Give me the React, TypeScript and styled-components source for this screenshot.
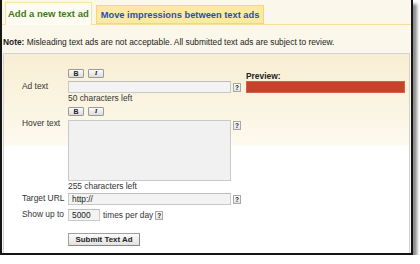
import React from "react";
import styled, { createGlobalStyle } from "styled-components";

const GlobalStyle = createGlobalStyle`
  html, body {
    margin: 0;
    padding: 0;
    background: #fff;
  }
  body {
    font-family: "Liberation Sans", Arial, sans-serif;
    font-size: 8.4px;
    color: #333;
  }
`;

const Frame = styled.div`
  width: 409px;
  height: 253px;
  border: 2px solid #151515;
  border-top: none;
  box-shadow: 4px 4px 3px rgba(0, 0, 0, 0.45);
  background: #fbf7ea;
  display: flex;
  flex-direction: column;
  overflow: hidden;
`;

const TabBar = styled.div`
  display: flex;
  align-items: flex-end;
  gap: 4px;
  height: 25px;
  padding-left: 3px;
  border-bottom: 1px solid #fcdd96;
  box-sizing: border-box;
`;

const Tab = styled.div<{ $active?: boolean }>`
  display: flex;
  align-items: center;
  box-sizing: border-box;
  height: ${(p) => (p.$active ? "23px" : "19px")};
  margin-bottom: ${(p) => (p.$active ? "-1px" : "0")};
  padding: ${(p) => (p.$active ? "0 2px 2px 2px" : "0 4px")};
  font-weight: bold;
  font-size: ${(p) => (p.$active ? "9.5px" : "9.3px")};
  color: ${(p) => (p.$active ? "#3d7a14" : "#1f4fb3")};
  background: ${(p) => (p.$active ? "#fefcf2" : "#fde9a6")};
  border: 1px solid ${(p) => (p.$active ? "#f7e2a6" : "#f9d47e")};
  border-bottom: ${(p) => (p.$active ? "none" : "1px solid #f9d47e")};
`;

const Note = styled.div`
  margin: 11px 0 0 1px;
  line-height: 12px;
  color: #222;

  b {
    font-weight: bold;
  }
`;

const Panel = styled.div`
  flex: 1;
  margin: 5px 1px 0 1px;
  border: 1px solid #d2d2d2;
  border-bottom: none;
  background: linear-gradient(#f8eed2 0px, #fdf9ee 90px, #ffffff 92px);
  padding: 15px 0 0 18px;
  display: flex;
`;

const FormColumn = styled.div`
  width: 219px;
  display: flex;
  flex-direction: column;
`;

const ToolRow = styled.div<{ $top?: number }>`
  display: flex;
  gap: 4px;
  padding-left: 46px;
  margin-top: ${(p) => p.$top ?? 0}px;
`;

const FormatButton = styled.button<{ $italic?: boolean }>`
  width: 16px;
  height: 9px;
  padding: 0;
  border: 1px solid #9a9a9a;
  border-radius: 1px;
  background: linear-gradient(#fbfbfb, #dcdcdc);
  font-family: ${(p) => (p.$italic ? '"Liberation Serif", serif' : '"Liberation Sans", sans-serif')};
  font-size: 7px;
  line-height: 7px;
  font-weight: bold;
  font-style: ${(p) => (p.$italic ? "italic" : "normal")};
  color: #222;
`;

const FieldRow = styled.div<{ $top?: number; $alignTop?: boolean }>`
  display: flex;
  align-items: ${(p) => (p.$alignTop ? "flex-start" : "center")};
  margin-top: ${(p) => p.$top ?? 0}px;
`;

const Label = styled.label`
  width: 46px;
  flex: none;
  line-height: 10px;
  margin-top: -2px;
  color: #333;
`;

const TextInput = styled.input<{ $width?: number }>`
  box-sizing: border-box;
  width: ${(p) => p.$width ?? 163}px;
  height: 12px;
  padding: 0 0 0 3px;
  margin: 0;
  border: 1px solid #c9c9c9;
  border-top-color: #bdbdbd;
  background: #f3f3f3;
  font-family: "Liberation Sans", Arial, sans-serif;
  font-size: 8.4px;
  color: #222;
  outline: none;
`;

const TextArea = styled.textarea`
  box-sizing: border-box;
  width: 163px;
  height: 61px;
  margin: 0;
  padding: 0;
  border: 1px solid #c9c9c9;
  background: #f1f1f1;
  resize: none;
  outline: none;
`;

const Help = styled.span<{ $gap?: number; $top?: number }>`
  box-sizing: border-box;
  width: 8px;
  height: 9px;
  margin-left: ${(p) => p.$gap ?? 2}px;
  margin-top: ${(p) => p.$top ?? 0}px;
  flex: none;
  display: flex;
  align-items: center;
  justify-content: center;
  border: 1px solid #a8a8a8;
  background: linear-gradient(#fdfdfd, #e4e4e4);
  font-size: 6.5px;
  font-weight: bold;
  color: #222;
`;

const Hint = styled.div`
  padding-left: 46px;
  line-height: 10px;
  color: #333;
`;

const Suffix = styled.span`
  margin-left: 3px;
  color: #333;
`;

const SubmitRow = styled.div`
  padding-left: 46px;
  margin-top: 12px;
`;

const SubmitButton = styled.button`
  box-sizing: border-box;
  width: 72px;
  height: 13px;
  padding: 0;
  border: 1px solid #a0a0a0;
  border-right-color: #888;
  border-bottom-color: #888;
  border-radius: 1px;
  background: linear-gradient(#fcfcfc, #e2e2e2);
  font-family: "Liberation Sans", Arial, sans-serif;
  font-size: 7.9px;
  font-weight: bold;
  color: #222;
`;

const PreviewColumn = styled.div`
  width: 159px;
  margin-left: 5px;
  padding-top: 3px;
`;

const PreviewTitle = styled.div`
  font-weight: bold;
  line-height: 9px;
  color: #222;
`;

const PreviewBox = styled.div`
  height: 12px;
  box-sizing: border-box;
  background: #c4432a;
  border: 1px solid #d2614a;
`;

const FormatBar = ({ top }: { top?: number }) => (
  <ToolRow $top={top}>
    <FormatButton>B</FormatButton>
    <FormatButton $italic>I</FormatButton>
  </ToolRow>
);

export default function App() {
  return (
    <>
      <GlobalStyle />
      <Frame>
        <TabBar>
          <Tab $active>Add a new text ad</Tab>
          <Tab>Move impressions between text ads</Tab>
        </TabBar>
        <Note>
          <b>Note:</b> Misleading text ads are not acceptable. All submitted text ads are subject to review.
        </Note>
        <Panel>
          <FormColumn>
            <FormatBar />
            <FieldRow $top={3}>
              <Label>Ad text</Label>
              <TextInput />
              <Help>?</Help>
            </FieldRow>
            <Hint>50 characters left</Hint>
            <FormatBar top={4} />
            <FieldRow $top={4} $alignTop>
              <Label>Hover text</Label>
              <TextArea />
              <Help $top={1}>?</Help>
            </FieldRow>
            <Hint>255 characters left</Hint>
            <FieldRow $top={2}>
              <Label>Target URL</Label>
              <TextInput defaultValue="http://" />
              <Help>?</Help>
            </FieldRow>
            <FieldRow $top={4}>
              <Label>Show up to</Label>
              <TextInput $width={32} defaultValue="5000" />
              <Suffix>times per day</Suffix>
              <Help>?</Help>
            </FieldRow>
            <SubmitRow>
              <SubmitButton>Submit Text Ad</SubmitButton>
            </SubmitRow>
          </FormColumn>
          <PreviewColumn>
            <PreviewTitle>Preview:</PreviewTitle>
            <PreviewBox />
          </PreviewColumn>
        </Panel>
      </Frame>
    </>
  );
}
